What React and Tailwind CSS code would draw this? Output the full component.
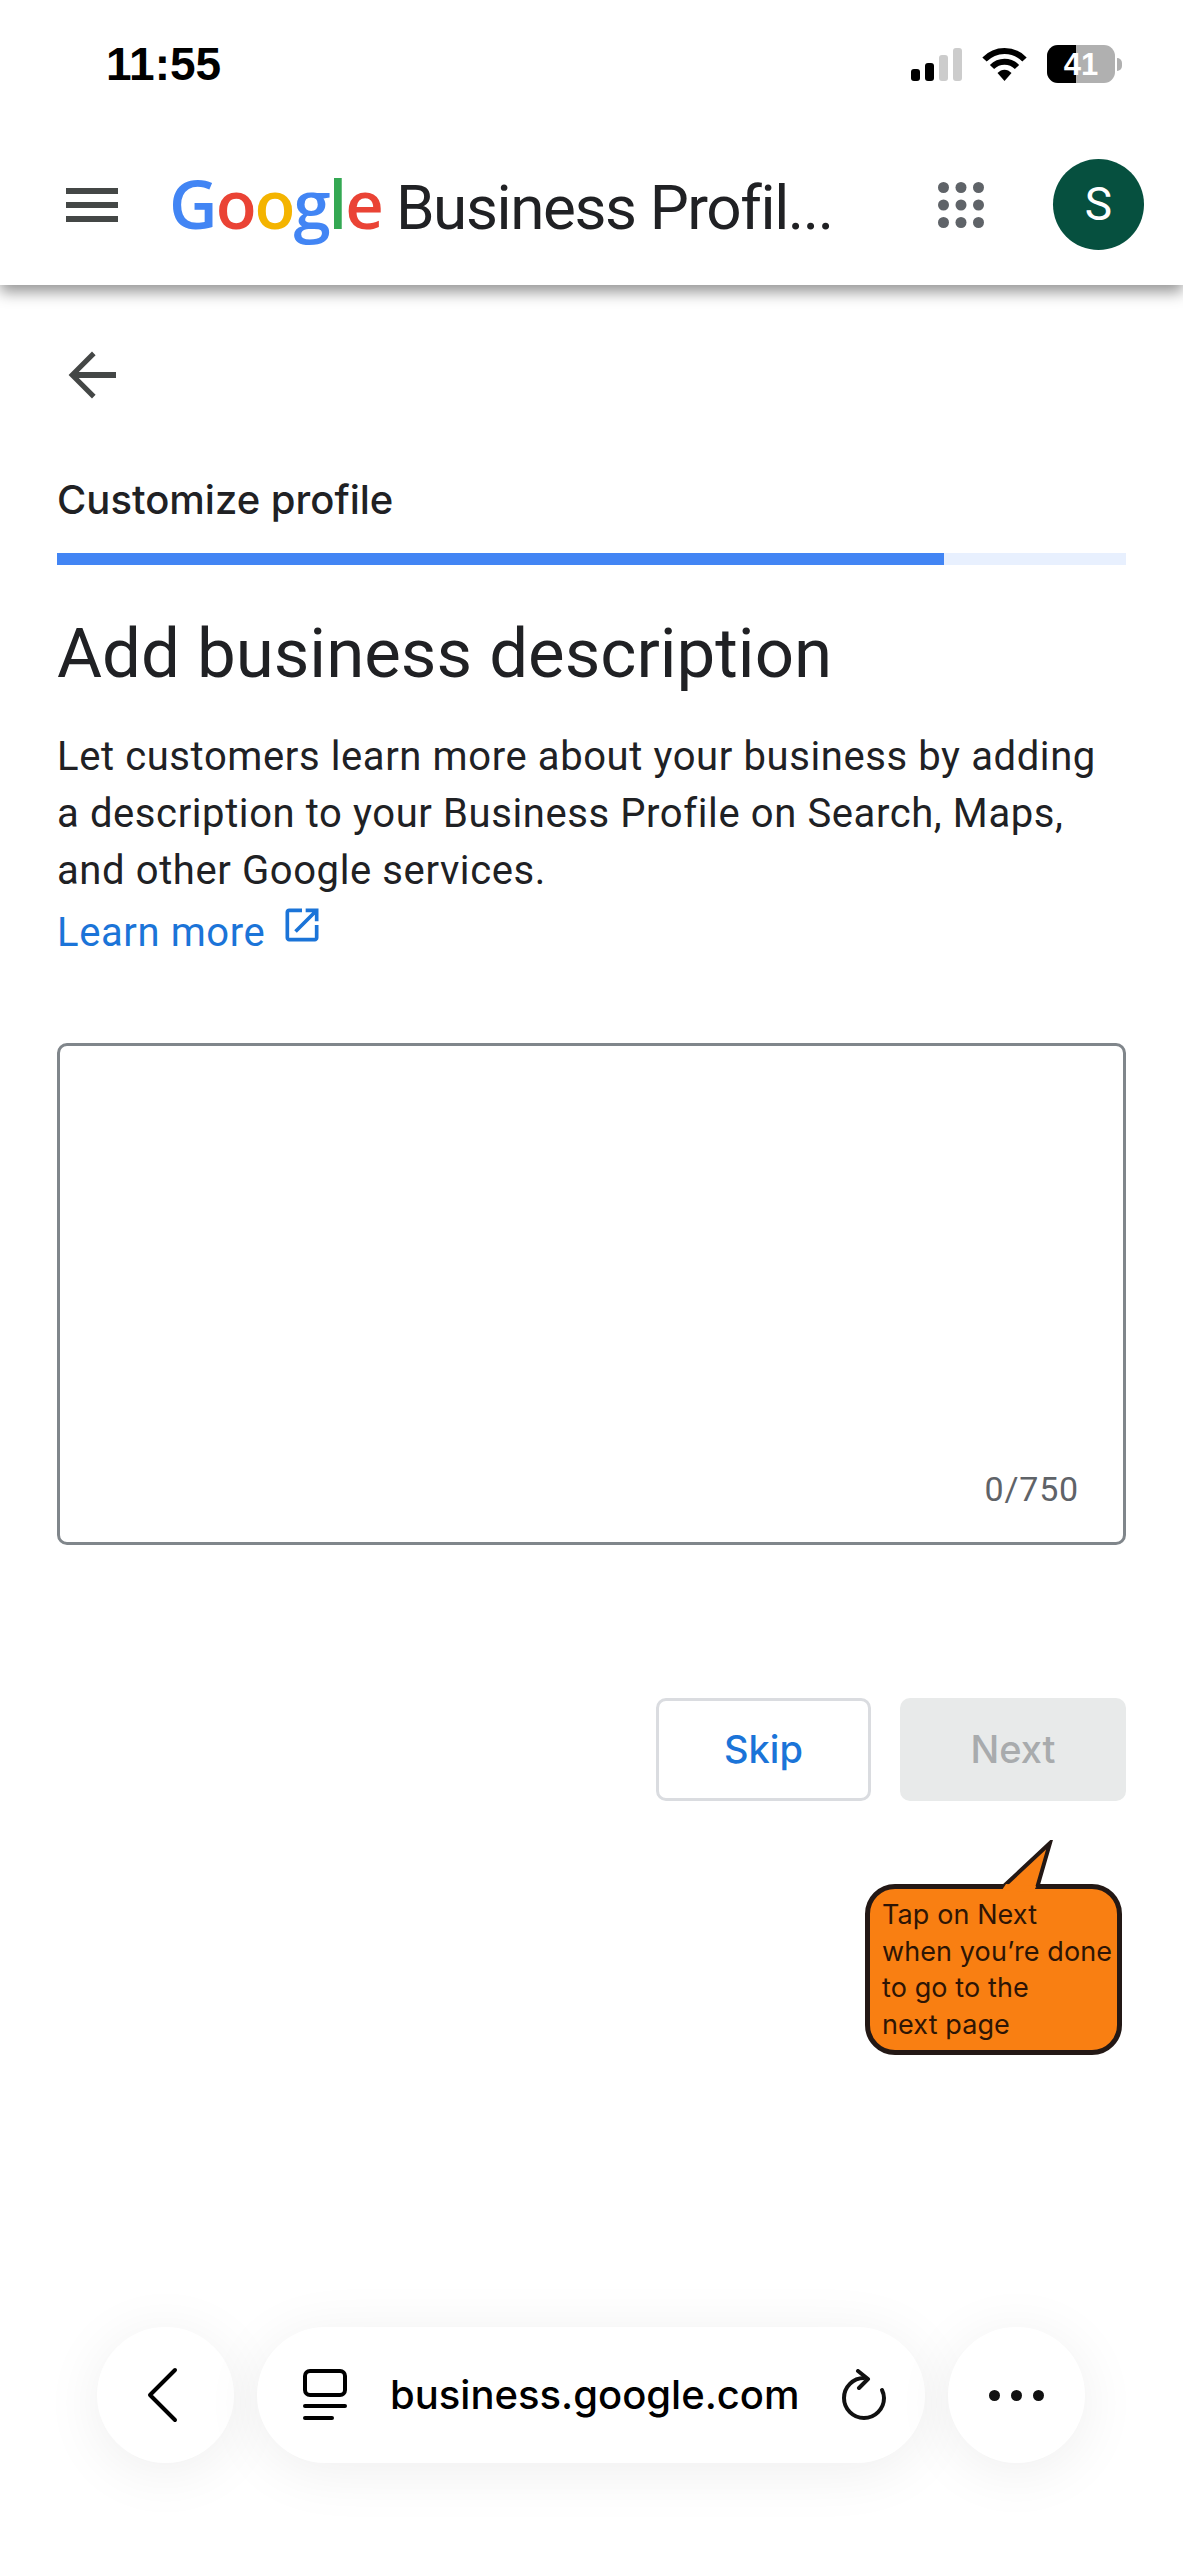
import React from 'react';

const sans = { fontFamily: 'Roboto, sans-serif' };
const inter = { fontFamily: 'Inter, sans-serif' };

// --- status bar icons ---
const SignalBars = () => (
    <div className="flex items-end gap-[5px] h-[33px]">
        <div className="w-[9px] h-[12px] rounded-[3px] bg-black" />
        <div className="w-[9px] h-[18px] rounded-[3px] bg-black" />
        <div className="w-[9px] h-[26px] rounded-[3px] bg-[#cccccc]" />
        <div className="w-[9px] h-[33px] rounded-[3px] bg-[#cccccc]" />
    </div>
);

const Wifi = () => (
    <svg width="45" height="34" viewBox="0 0 45 34" fill="none">
        <path d="M2.5 12.5C13.5 1 31.5 1 42.5 12.5" stroke="black" strokeWidth="6" />
        <path d="M10 20C17 13 28 13 35 20" stroke="black" strokeWidth="6" />
        <path d="M15.5 26C19.5 21.5 25.5 21.5 29.5 26L22.5 34Z" fill="black" />
    </svg>
);

const Battery = () => (
    <div className="flex items-center gap-[2px]">
        <div className="relative w-[68px] h-[38px] rounded-[11px] overflow-hidden flex bg-[#b0b0b0]">
            <div className="w-[29px] bg-black" />
            <span className="absolute inset-0 flex items-center justify-center text-white text-[31px] font-bold leading-none" style={{ fontFamily: '"Liberation Sans", sans-serif' }}>41</span>
        </div>
        <div className="w-[5px] h-[13px] rounded-r-full bg-[#b0b0b0]" />
    </div>
);

const AppsGrid = () => (
    <svg width="46" height="46" viewBox="0 0 46 46" fill="#5f6368">
        {[5.5, 23, 40.5].map((cy) =>
            [5.5, 23, 40.5].map((cx) => <circle key={`${cx}-${cy}`} cx={cx} cy={cy} r="5.5" />)
        )}
    </svg>
);

const App = () => {
    return (
        <div className="w-full h-[2560px] bg-white flex flex-col overflow-hidden" style={sans}>
            {/* --- Status bar and app header --- */}
            <header className="h-[285px] bg-white shadow-[0_7px_14px_rgba(0,0,0,0.42)] flex flex-col shrink-0">
                <div className="h-[128px] flex items-center justify-between pl-[106px] pr-[61px]">
                    <span className="text-[46px] font-semibold text-black leading-none" style={{ fontFamily: '"Liberation Sans", sans-serif' }}>11:55</span>
                    <div className="flex items-center gap-[20px]">
                        <SignalBars />
                        <Wifi />
                        <Battery />
                    </div>
                </div>
                <div className="mt-[31px] flex items-center pl-[66px] pr-[39px]">
                    <div className="w-[52px] flex flex-col gap-[8px] shrink-0">
                        <div className="h-[6px] bg-[#444746]" />
                        <div className="h-[6px] bg-[#444746]" />
                        <div className="h-[6px] bg-[#444746]" />
                    </div>
                    <div className="ml-[51px] flex items-baseline text-[67px] leading-none whitespace-nowrap font-semibold" style={{ fontFamily: '"Open Sans", sans-serif' }}>
                        <span className="tracking-[-2px]">
                            <span className="text-[#4285f4]">G</span>
                            <span className="text-[#ea4335]">o</span>
                            <span className="text-[#f4b400]">o</span>
                            <span className="text-[#4285f4]">g</span>
                            <span className="text-[#34a853]">l</span>
                            <span className="text-[#ea4335]">e</span>
                        </span>
                        <span className="ml-[14px] text-[62px] font-normal text-[#202124] tracking-[-1.4px]" style={sans}>Business Profil...</span>
                    </div>
                    <div className="ml-auto mr-[69px]">
                        <AppsGrid />
                    </div>
                    <div className="w-[91px] h-[91px] rounded-full bg-[#06503f] flex items-center justify-center text-white text-[46px] shrink-0">S</div>
                </div>
            </header>

            {/* --- Main content --- */}
            <main className="px-[57px] flex flex-col">
                <svg className="mt-[54px] ml-[-1px]" width="72" height="72" viewBox="0 0 24 24" fill="#444746">
                    <path d="M20 11H7.6l5.6-5.6L12 4.2 4.2 12l7.8 7.8 1.2-1.2L7.6 13H20z" />
                </svg>
                <h2 className="mt-[64px] text-[40px] font-medium leading-[50px] text-[#202124]" style={inter}>Customize profile</h2>
                <div className="mt-[28px] h-[12px] bg-[#e8f0fe] flex">
                    <div className="w-[887px] bg-[#4285f4]" />
                </div>
                <h1 className="mt-[49px] text-[69px] leading-[80px] text-[#202124]">Add business description</h1>
                <p className="mt-[34px] text-[40px] leading-[57px] text-[#202124] tracking-[0.6px]">
                    Let customers learn more about your business by adding<br />
                    a description to your Business Profile on Search, Maps,<br />
                    and other Google services.
                </p>
                <div className="mt-[5px] flex items-center gap-[15px] text-[#1b74d8] text-[40px] leading-[57px] tracking-[0.6px]">
                    <span>Learn more</span>
                    <svg className="mt-[-16px]" width="44" height="44" viewBox="0 0 24 24" fill="#1b74d8">
                        <path d="M19 19H5V5h7V3H5c-1.11 0-2 .9-2 2v14c0 1.1.89 2 2 2h14c1.1 0 2-.9 2-2v-7h-2v7zM14 3v2h3.59l-9.83 9.83 1.41 1.41L19 6.41V10h2V3h-7z" />
                    </svg>
                </div>

                {/* --- Description box --- */}
                <div className="mt-[82px] h-[502px] border-[3px] border-[#80868b] rounded-[10px] flex items-end justify-end pr-[44px] pb-[33px]">
                    <span className="text-[34px] leading-[40px] text-[#5f6368] tracking-[0.8px]">0/750</span>
                </div>

                {/* --- Actions --- */}
                <div className="mt-[153px] flex justify-end gap-[29px]">
                    <button className="w-[215px] h-[103px] bg-white border-[3px] border-[#dadce0] rounded-[10px] text-[#1b74d8] text-[38px] font-medium" style={inter}>Skip</button>
                    <button className="w-[226px] h-[103px] bg-[#e8eaea] rounded-[10px] text-[#a8abad] text-[38px] font-medium" style={inter}>Next</button>
                </div>

                {/* --- Callout pointing at the Next button --- */}
                <div className="relative mt-[83px] self-end mr-[4px] w-[257px] h-[171px] bg-[#f97f12] border-[5px] border-[#231815] rounded-[30px] pl-[12px] pt-[8px] text-[27px] leading-[36.5px] text-[#2e1505] whitespace-nowrap tracking-[0.1px]" style={inter}>
                    <svg className="absolute left-[130px] top-[-49px]" width="60" height="54" viewBox="0 0 60 54">
                        <path d="M4 46L50 3L37 48" fill="#f97f12" stroke="#231815" strokeWidth="4" />
                        <path d="M2 50L6 44L36 46L34 52Z" fill="#f97f12" />
                    </svg>
                    Tap on Next<br />
                    when you’re done<br />
                    to go to the<br />
                    next page
                </div>
            </main>

            {/* --- Browser toolbar --- */}
            <nav className="mt-auto mb-[97px] pl-[97px] pr-[98px] flex items-stretch justify-between h-[136px]">
                <div className="w-[137px] rounded-full bg-white shadow-[0_8px_60px_rgba(0,0,0,0.07)] flex items-center justify-center">
                    <svg className="mr-[8px]" width="32" height="56" viewBox="0 0 32 56" fill="none" stroke="black" strokeWidth="4" strokeLinecap="round" strokeLinejoin="round">
                        <path d="M29 3L4 28L29 53" />
                    </svg>
                </div>
                <div className="w-[668px] rounded-full bg-white shadow-[0_8px_60px_rgba(0,0,0,0.07)] flex items-center pl-[46px]">
                    <svg width="44" height="52" viewBox="0 0 44 52" fill="none" stroke="black" strokeLinecap="round">
                        <rect x="2" y="2" width="40" height="24" rx="5" strokeWidth="4" />
                        <path d="M2 37H42" strokeWidth="4" />
                        <path d="M2 49H29" strokeWidth="4" />
                    </svg>
                    <span className="ml-[43px] text-[40px] text-black font-medium leading-none" style={inter}>business.google.com</span>
                    <svg className="ml-[41px]" width="46" height="52" viewBox="0 0 46 52" fill="none" stroke="#111111" strokeWidth="4" strokeLinecap="round" strokeLinejoin="round">
                        <path d="M23 9C12 9 3 18 3 29C3 40 12 49 23 49C34 49 43 40 43 29C43 26 42 23 41 21" />
                        <path d="M17 2L27 10L18 19" />
                    </svg>
                </div>
                <div className="w-[137px] rounded-full bg-white shadow-[0_8px_60px_rgba(0,0,0,0.07)] flex items-center justify-center gap-[11px]">
                    <div className="w-[11px] h-[11px] rounded-full bg-[#111111]" />
                    <div className="w-[11px] h-[11px] rounded-full bg-[#111111]" />
                    <div className="w-[11px] h-[11px] rounded-full bg-[#111111]" />
                </div>
            </nav>
        </div>
    );
};

export default App;
